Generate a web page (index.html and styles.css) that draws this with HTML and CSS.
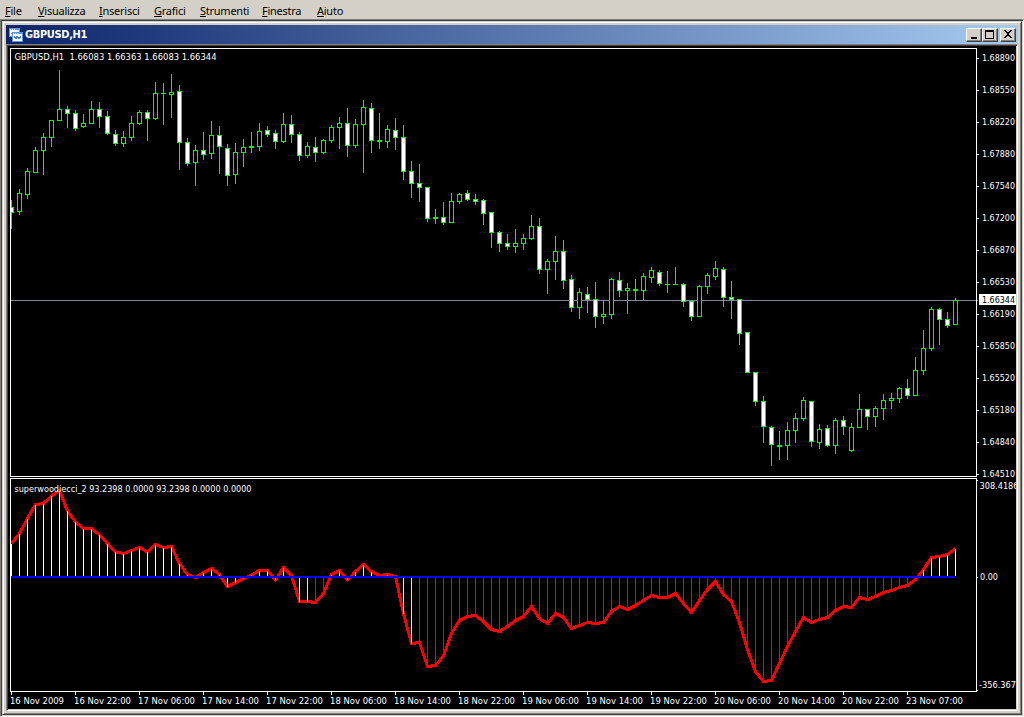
FILE: index.html
```html
<!DOCTYPE html>
<html lang="it">
<head>
    <meta charset="UTF-8">
    <title>GBPUSD,H1</title>
    <link rel="stylesheet" href="styles.css">
</head>
<body>

    <!-- Menu -->
    <nav class="menu-bar">
        <span><u>F</u>ile</span>
        <span><u>V</u>isualizza</span>
        <span><u>I</u>nserisci</span>
        <span><u>G</u>rafici</span>
        <span><u>S</u>trumenti</span>
        <span><u>F</u>inestra</span>
        <span><u>A</u>iuto</span>
    </nav>

    <div class="workspace">
        <div class="chart-window">

            <!-- Title bar -->
            <div class="title-bar">
                <svg class="title-icon" width="14" height="14" viewBox="0 0 14 14" shape-rendering="crispEdges">
                    <rect x="0" y="0" width="11" height="9" fill="#5a96e6"/>
                    <rect x="1" y="2" width="9" height="6" fill="#fff"/>
                    <path d="M1 1h1M3 1h1M5 1h1" stroke="#fff" transform="translate(0 .5)"/>
                    <path d="M2 5h1v-1h1v1h1v1h1" stroke="#5a96e6" fill="none" transform="translate(0 .5)"/>
                    <rect x="3" y="4" width="11" height="10" fill="#5a96e6"/>
                    <rect x="4" y="6" width="9" height="7" fill="#fff"/>
                    <path d="M4 5h1M6 5h1M8 5h1" stroke="#fff" transform="translate(0 .5)"/>
                    <path d="M5 8l2 3 1-3 2 3 2-3" stroke="#3f7fd8" fill="none"/>
                </svg>
                <h1>GBPUSD,H1</h1>
                <div class="window-buttons">
                    <button><svg width="12" height="10" shape-rendering="crispEdges"><rect x="3" y="8" width="6" height="2"/></svg></button>
                    <button><svg width="12" height="10" shape-rendering="crispEdges"><path d="M1 1h9v9h-9zM2 3v6h7v-6z" fill-rule="evenodd"/></svg></button>
                    <button class="close"><svg width="12" height="10" shape-rendering="crispEdges"><path d="M2 1h2v1h1v1h2v-1h1v-1h2v1h-1v1h-1v1h-1v2h1v1h1v1h1v1h-2v-1h-1v-1h-2v1h-1v1h-2v-1h1v-1h1v-1h1v-2h-1v-1h-1v-1h-1z"/></svg></button>
                </div>
            </div>

            <!-- Chart -->
            <div class="client">
                <svg id="chart" width="1008" height="663" viewBox="8 46 1008 663"></svg>
            </div>

        </div>
    </div>

    <script src="chart.js"></script>
</body>
</html>
```
FILE: styles.css
```css
body {
    margin: 0;
    height: 717px;
    overflow: hidden;
    display: flex;
    flex-direction: column;
    background-color: #d4d0c8;
    font-family: "DejaVu Sans Condensed", "DejaVu Sans", sans-serif;
    font-stretch: condensed;
}

/* Menu */
.menu-bar {
    flex: none;
    height: 19px;
    padding-left: 5px;
    display: grid;
    grid-template-columns: 33px 61px 55px 46px 62px 55px auto;
    font-family: "Noto Sans", sans-serif;
    font-stretch: normal;
    font-size: 11px;
    line-height: 22px;
    letter-spacing: -0.25px;
    color: #000;
}

/* Sunken area that holds the chart window */
.workspace {
    flex: 1;
    padding: 1px;
    border: 1px solid;
    border-color: #808080 #fff #fff #808080;
    box-shadow: inset 1px 1px #404040;
}

.chart-window {
    box-sizing: border-box;
    height: 694px;
    padding: 3px;
    border: 1px solid;
    border-color: #d4d0c8 #404040 #404040 #d4d0c8;
    box-shadow: inset 1px 1px #fff, inset -1px -1px #808080;
}

/* Title bar */
.title-bar {
    height: 19px;
    display: flex;
    align-items: center;
    padding: 0 2px 0 3px;
    box-sizing: border-box;
    background: linear-gradient(to right, #0a246a, #a6caf0);
}

.title-bar h1 {
    margin: 0 0 0 2px;
    font-size: 11px;
    line-height: 19px;
    letter-spacing: -0.35px;
    color: #fff;
}

.window-buttons {
    display: flex;
    margin-left: auto;
}

.window-buttons button {
    width: 16px;
    height: 14px;
    padding: 0 1px 1px 1px;
    border: 1px solid;
    border-color: #fff #404040 #404040 #fff;
    box-shadow: inset -1px -1px #808080;
    background-color: #d4d0c8;
}

.window-buttons button svg {
    display: block;
}

.window-buttons .close {
    margin-left: 2px;
}

/* Chart area */
.client {
    padding: 1px;
    border: 1px solid;
    border-color: #808080 #fff #fff #808080;
    box-shadow: inset 1px 1px #404040;
}

.client svg {
    display: block;
    background-color: #000;
}

#chart text {
    font-size: 9.5px;
    fill: #fff;
    white-space: pre;
}

#chart .price-now {
    fill: #000;
}
```
FILE: chart.js
```javascript
const chart = document.getElementById('chart');
const FIRST_X = 11;
const STEP = 8;
const ZERO = 577;

// high, body top, body bottom, low, 1 = bearish (filled)
const candles = [
    [200,207,212,228,1],[189,193,211,214,0],[168,171,194,198,0],[147,150,172,172,0],[133,137,150,174,0],
    [120,120,137,146,0],[70,109,120,120,0],[106,109,113,127,1],[110,113,128,130,1],[114,123,126,127,0],
    [101,109,123,123,0],[102,109,116,127,1],[111,116,133,134,1],[130,134,143,145,1],[131,137,143,146,0],
    [116,123,137,140,0],[110,112,123,124,0],[110,112,118,140,1],[82,93,118,119,0],[83,93,93,124,0],
    [74,92,94,117,0],[85,91,142,169,1],[138,142,163,165,1],[145,150,162,185,0],[132,150,154,159,1],
    [121,135,153,158,0],[126,135,146,173,1],[144,148,175,185,1],[143,152,174,183,0],[139,147,152,166,0],
    [132,146,147,152,0],[123,131,146,150,0],[126,130,134,136,1],[130,133,141,148,1],[113,124,141,142,0],
    [115,124,134,142,1],[132,134,155,160,1],[142,146,155,157,0],[137,147,152,161,1],[139,140,152,153,0],
    [125,127,140,142,0],[117,123,127,148,0],[108,123,145,156,1],[119,124,145,147,0],[100,107,124,172,0],
    [103,108,140,152,1],[113,140,141,148,0],[125,129,141,147,0],[118,130,137,149,1],[125,137,171,179,1],
    [161,171,183,197,1],[164,183,187,201,1],[187,187,218,221,1],[209,217,218,223,0],[202,217,222,224,1],
    [193,201,222,222,0],[193,194,201,203,0],[190,193,199,200,1],[194,199,201,204,1],[199,200,213,224,1],
    [212,212,232,247,1],[231,232,243,251,1],[234,243,246,249,1],[229,243,246,252,0],[234,238,243,249,0],
    [215,226,238,239,0],[218,226,269,273,1],[259,261,269,293,0],[236,251,261,279,0],[240,251,280,288,1],
    [275,279,307,311,1],[288,292,307,318,0],[287,294,299,312,1],[282,299,316,327,1],[300,314,316,323,0],
    [278,279,314,318,0],[272,280,290,296,1],[283,288,290,313,0],[279,289,290,300,0],[273,276,290,299,0],
    [267,270,277,282,0],[270,272,283,285,1],[271,284,284,292,0],[267,284,284,284,0],[283,284,301,306,1],
    [301,301,316,320,1],[285,286,316,316,0],[273,275,286,293,0],[261,268,276,279,0],[267,269,297,306,1],
    [281,297,299,318,1],[299,299,333,344,1],[332,332,372,372,1],[372,372,401,405,1],[396,401,426,442,1],
    [426,427,444,465,1],[431,445,446,459,0],[422,430,445,459,0],[413,418,430,442,0],[397,400,418,420,0],
    [401,401,441,446,1],[424,429,442,448,0],[425,428,445,446,1],[418,420,445,453,0],[416,420,426,434,1],
    [423,427,450,451,0],[394,409,427,427,0],[409,409,416,429,1],[406,408,416,426,0],[394,400,408,419,0],
    [393,398,400,408,0],[387,388,398,402,0],[379,388,395,398,1],[357,370,395,395,0],[330,348,370,374,0],
    [307,309,348,350,0],[308,309,319,344,1],[312,319,325,327,1],[298,300,324,324,0]
];

const cci = [
    543.5,533.5,518.5,504.5,503.5,496,490.5,511,522,528.5,528.5,535,543.5,552,553.5,550.5,547.5,552,544.5,547.5,
    546.5,563.5,574.5,577.5,572.5,568.5,574.5,586.5,582.5,578.5,575,570.5,570.5,580,567.5,575.5,601.5,601.5,602.5,593.5,
    574.5,570.5,580,571.5,564.5,571.5,575.5,574.5,576.5,613.5,643.5,642.5,666.5,665.5,656,633.5,620.5,616.5,615.5,621.5,
    629.5,631.5,626.5,620.5,616.5,606.5,618.5,623.5,613.5,617.5,628.5,625.5,622.5,623.5,622.5,611.5,606.5,609.5,605.5,600.5,
    595.5,597.5,597.5,593.5,603.5,612.5,600.5,589.5,581.5,594.5,601.5,622.5,649.5,671.5,681.5,680.5,663.5,646.5,631.5,617.5,
    622.5,619.5,617.5,610.5,606.5,607.5,597.5,599.5,596.5,592.5,590.5,587.5,585.5,579.5,569.5,557.5,556.5,554.5,548.5
];

// [last bar index, colour] for each run of histogram bars
const barRuns = [
    [26, '#fff'], [31, '#ff0'], [32, '#fff'], [37, '#ff0'], [39, '#008000'], [44, '#ff0'],
    [48, '#fff'], [50, '#ff0'], [113, '#008000'], [115, '#ff0'], [118, '#fff']
];

const prices = ['1.68890', '1.68550', '1.68220', '1.67880', '1.67540', '1.67200', '1.66870',
    '1.66530', '1.66190', '1.65850', '1.65520', '1.65180', '1.64840', '1.64510'];

const times = ['16 Nov 2009', '16 Nov 22:00', '17 Nov 06:00', '17 Nov 14:00', '17 Nov 22:00',
    '18 Nov 06:00', '18 Nov 14:00', '18 Nov 22:00', '19 Nov 06:00', '19 Nov 14:00',
    '19 Nov 22:00', '20 Nov 06:00', '20 Nov 14:00', '20 Nov 22:00', '23 Nov 07:00'];

function rect(x, y, w, h, fill) {
    return `<rect x="${x}" y="${y}" width="${w}" height="${h}" fill="${fill}"/>`;
}

function label(x, y, width, value, cls) {
    return `<text x="${x}" y="${y}" textLength="${width}" lengthAdjust="spacingAndGlyphs" class="${cls || 'label'}">${value}</text>`;
}

let out = '<g shape-rendering="crispEdges">';

// Current price line
out += rect(11, 300, 967, 1, '#778899');

// Candles
candles.forEach(([high, top, bottom, low, bearish], i) => {
    const x = FIRST_X + i * STEP;
    out += rect(x, high, 1, low - high + 1, '#0f0');
    out += rect(x - 2, top, 5, bottom - top + 1, '#0f0');
    if (bottom - top > 1) {
        out += rect(x - 1, top + 1, 3, bottom - top - 1, bearish ? '#fff' : '#000');
    }
});
out += rect(8, 47, 2, 430, '#000');

// CCI line, histogram and zero line
const points = cci.map((y, i) => `${FIRST_X + i * STEP + 0.5},${y}`).join(' ');
out += `<polyline points="${points}" fill="none" stroke="#f00" stroke-width="3" stroke-linejoin="round"/>`;
cci.forEach((y, i) => {
    const color = barRuns.find(run => i <= run[0])[1];
    const end = Math.round(y);
    out += rect(FIRST_X + i * STEP, Math.min(end, ZERO), 1, Math.abs(end - ZERO), color);
});
out += rect(11, 576, 945, 2, '#00f');

// Pane borders
out += rect(10, 48, 967, 1, '#fff') + rect(10, 48, 1, 429, '#fff');
out += rect(10, 476, 967, 1, '#fff') + rect(976, 48, 1, 429, '#fff');
out += rect(10, 478, 967, 1, '#fff') + rect(10, 478, 1, 214, '#fff');
out += rect(10, 691, 967, 1, '#fff') + rect(976, 478, 1, 214, '#fff');

// Axis ticks
prices.forEach((p, i) => { out += rect(977, 58 + i * 32, 2, 1, '#fff'); });
times.forEach((t, i) => { out += rect(11 + i * 64, 692, 1, 3, '#fff'); });
[480, 577, 690].forEach(y => { out += rect(977, y, 1, 1, '#fff'); });
out += rect(979, 294, 37, 11, '#fff');
out += '</g>';

// Labels
prices.forEach((p, i) => { out += label(982, 61 + i * 32, 33, p); });
times.forEach((t, i) => { out += label(10 + i * 64, 704, i ? 57 : 54, t); });
out += label(982, 303, 33, '1.66344', 'price-now');
out += label(979.5, 489, 39, '308.4186');
out += label(980, 580, 18, '0.00');
out += label(979, 688, 37, '-356.367');
out += label(14.5, 60, 202, 'GBPUSD,H1  1.66083 1.66363 1.66083 1.66344');
out += label(14.5, 492, 237, 'superwoodiecci_2 93.2398 0.0000 93.2398 0.0000 0.0000');

chart.innerHTML = out;
```
